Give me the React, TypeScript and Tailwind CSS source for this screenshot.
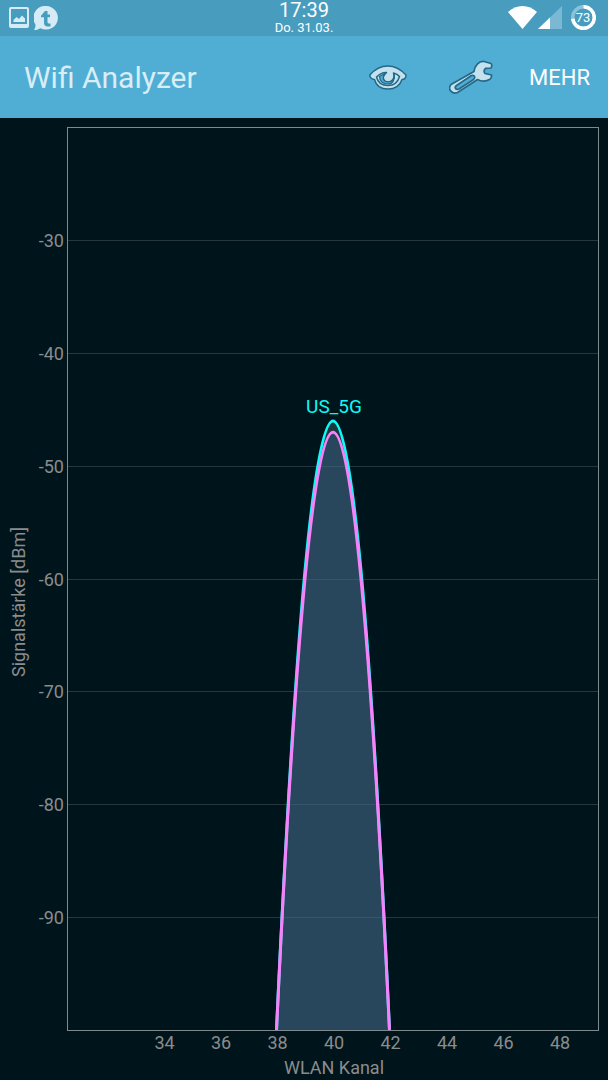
interface Network {
  name?: string;
  channel: number;
  level: number;
  stroke: string;
  fill: string;
}

const networks: Network[] = [
  { name: "US_5G", channel: 40, level: -46, stroke: "#0cfaf8", fill: "#7b9a9e40" },
  { channel: 40, level: -47, stroke: "#f881fb", fill: "#325c8373" },
];

const levels = [-30, -40, -50, -60, -70, -80, -90];
const channels = [34, 36, 38, 40, 42, 44, 46, 48];

const plot = { left: 68, right: 599, top: 9, bottom: 912 };

const xOf = (channel: number) => 333 + (channel - 40) * 28.25;
const yOf = (level: number) =>
  plot.top + ((-20 - level) / 80) * (plot.bottom - plot.top);

// A quadratic curve whose control point mirrors the floor is an exact parabola
function parabola({ channel, level }: Network) {
  const control = 2 * yOf(level) - plot.bottom + 1;
  return `M${xOf(channel - 2)} ${plot.bottom}Q${xOf(channel)} ${control} ${xOf(channel + 2)} ${plot.bottom}`;
}

function StatusBar() {
  return (
    <div className="grid h-9 grid-cols-3 bg-[#489dbf] text-white">
      <div className="flex items-center gap-0.5 pl-2 text-[#d5ebf5]">
        <svg className="size-6" viewBox="0 0 24 24" fill="none">
          <rect x="2" y="2" width="18" height="19" rx="1" stroke="currentColor" strokeWidth="2" />
          <path d="M2 19.500h18" stroke="currentColor" strokeWidth="3" />
          <path d="M5.500 16v-2l3-3 2.500 2 3-3.500 3 3v3.500z" fill="currentColor" />
        </svg>
        <svg className="size-6" viewBox="0 0 24 24">
          <path d="M12 0a11.800 11.800 0 1 1-5.500 22.200C5 23 3 24 0 24c1-1.500 1.500-3 1.500-5.500A11.800 11.800 0 0 1 12 0z" fill="currentColor" />
          <path d="M7 9.800L11 5h2.500v3.500h2.500v2.800h-2.500V16q0 1.500 1.500 1.500h1.500v3h-3Q10 20.500 10 16.500v-5.200H7z" fill="#489dbf" />
        </svg>
      </div>
      <div className="flex flex-col items-center">
        <div className="text-[20px] leading-5">17:39</div>
        <div className="text-[13px] leading-4">Do. 31.03.</div>
      </div>
      <div className="flex items-center justify-end pr-3">
        <svg className="h-7 w-8" viewBox="0 0 32 28">
          <path d="M2 8C10 0 23 0 31 8L16.500 25z" fill="white" />
        </svg>
        <svg className="size-6" viewBox="0 0 24 24">
          <path d="M24 0v23H0z" fill="#7ab8d3" />
          <path d="M12 11.500v11.500H0z" fill="white" />
        </svg>
        <svg className="ml-2 size-[26px]" viewBox="0 0 26 26">
          <circle cx="13.500" cy="12.500" r="10.800" fill="none" stroke="#8bc2da" strokeWidth="3.500" />
          <circle cx="13.500" cy="12.500" r="10.800" fill="none" stroke="white" strokeWidth="3.500" pathLength="100" strokeDasharray="73 27" transform="rotate(-90 13.500 12.500)" />
          <text x="13" y="17" textAnchor="middle" fontSize="13" fill="white">73</text>
        </svg>
      </div>
    </div>
  );
}

function EyeIcon() {
  return (
    <svg className="h-7 w-10" viewBox="0 0 40 28" stroke="#256888" strokeWidth="1.500" strokeLinejoin="round" strokeLinecap="round">
      <path d="M.8 12C6 6 12 3 18.800 3S31.500 6 37 12c0 2.800-1.500 4.500-4 4.500-2 6-7 9.500-14 9.500s-12-3.500-13.500-9.500C3 16.500.8 14.800.8 12z" fill="#c4e2ee" />
      <path d="M7.500 14C10.500 11 14 9.300 17.500 9.500l-2 2c-3 3.500-.5 7.500 3.500 7.500 4.500 0 7.500-4 5.500-9 2.500.7 4.500 1.800 6 3.500-1.500 5.500-5.500 9-11.500 9S8.800 19.500 7.500 14z" fill="#c4e2ee" />
      <path d="M10.500 13.500l6.500-3.800-1.500 2c-3 3.500-.5 7.300 3.500 7.300s7-3.500 6-8c1.500 5.500-1.500 10-6 10-5 0-8.500-3-8.500-7.500z" fill="#50aed4" strokeWidth="1.200" />
    </svg>
  );
}

function WrenchIcon() {
  return (
    <svg className="h-9 w-11" viewBox="0 0 44 36" stroke="#256888" strokeWidth="1.700" strokeLinejoin="round">
      <path d="M25 12.500C25.500 6.500 30 2 35 2.500l7 2q1.500 2.200 0 4.500l-5.500.3q-2.500 2.500-.5 5.200l6.500 1.500q.5 2-1.500 4.300C37 22.500 33 23 28.500 20.500L8.500 33.500c-5 2-10.500-3-6.500-8z" fill="#c4e2ee" />
      <path d="M7.500 26.500L22.500 16.500c3-1 4.500 2 2 4L10 30c-3.500 1.200-5-1.500-2.500-3.500z" fill="#50aed4" />
    </svg>
  );
}

function ActionBar() {
  return (
    <header className="flex h-[82px] items-center bg-[#50aed4] pr-[18px] pl-6">
      <h1 className="flex-1 text-[30px] text-[#d9edf6]">Wifi Analyzer</h1>
      <div className="flex items-center">
        <button type="button" aria-label="Ansicht" className="mr-10">
          <EyeIcon />
        </button>
        <button type="button" aria-label="Einstellungen" className="mr-9">
          <WrenchIcon />
        </button>
        <button type="button" className="text-[22px] text-white">
          MEHR
        </button>
      </div>
    </header>
  );
}

function ChannelGraph() {
  return (
    <svg className="block w-full" viewBox="0 0 608 962" fontSize="18" fill="#8b8c8e">
      {levels.map((level) => (
        <g key={level}>
          <path d={`M${plot.left} ${Math.round(yOf(level)) + 0.5}H${plot.right}`} stroke="#26383d" />
          <text x="64" y={yOf(level) + 7} textAnchor="end">
            {level}
          </text>
        </g>
      ))}
      {networks.map((network) => (
        <path key={network.level} d={parabola(network)} fill={network.fill} />
      ))}
      <rect
        x={plot.left - 0.5}
        y={plot.top + 0.5}
        width={plot.right - plot.left}
        height={plot.bottom - plot.top}
        fill="none"
        stroke="#808a8d"
      />
      {networks.map((network) => (
        <g key={network.level}>
          <path d={parabola(network)} fill="none" stroke={network.stroke} strokeWidth="3" />
          {network.name && (
            <text x={xOf(network.channel) + 1} y={yOf(network.level) - 7} textAnchor="middle" fontSize="19" fill={network.stroke}>
              {network.name}
            </text>
          )}
        </g>
      ))}
      {channels.map((channel) => (
        <text key={channel} x={xOf(channel) + 1} y="931" textAnchor="middle">
          {channel}
        </text>
      ))}
      <text x="334" y="956" textAnchor="middle">
        WLAN Kanal
      </text>
      <text transform="translate(25 484) rotate(-90)" textAnchor="middle">
        Signalstärke [dBm]
      </text>
    </svg>
  );
}

export default function App() {
  return (
    <div className="min-h-screen bg-[#00151b] font-[Roboto,sans-serif]">
      <StatusBar />
      <ActionBar />
      <main>
        <ChannelGraph />
      </main>
    </div>
  );
}
